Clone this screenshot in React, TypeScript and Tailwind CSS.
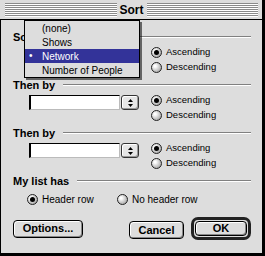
import React from 'react';

function Stripes() {
  return (
    <div className="flex-1 flex flex-col">
      {[0, 1, 2, 3, 4, 5, 6].map(i => (
        <div key={i} className="h-[2px] border-t border-[#8a8a8a] border-b border-b-white" />
      ))}
    </div>
  );
}

function Radio({ on }: { on?: boolean }) {
  return (
    <span className="w-[11px] h-[11px] rounded-full border border-[#222] bg-[radial-gradient(circle_at_35%_35%,#ffffff_10%,#9a9a9a_90%)] flex items-center justify-center shrink-0">
      {on && <span className="w-[5px] h-[5px] rounded-full bg-black" />}
    </span>
  );
}

function SectionLabel({ text }: { text: string }) {
  return (
    <div className="flex items-center h-[12px] gap-[8px]">
      <span className="font-bold text-[11px] leading-none">{text}</span>
      <div className="flex-1 h-[2px] border-t border-[#808080] border-b border-b-white" />
    </div>
  );
}

function SortRow() {
  return (
    <div className="mt-[2px] flex h-[30px]">
      <div className="ml-[16px] mt-[2px] flex gap-[1px] h-[15px]">
        <div className="w-[91px] h-[15px] bg-white border-t border-l-2 border-black border-r border-b border-r-[#bbb] border-b-[#bbb]" />
        <div className="w-[18px] h-[15px] rounded-[3px] border border-[#333] bg-[#e6e6e6] shadow-[inset_1px_1px_0_#fff,inset_-1px_-1px_0_#999] flex items-center justify-center">
          <svg width="5" height="8" viewBox="0 0 5 8">
            <polygon points="2.5,0 5,3 0,3" fill="#000" />
            <polygon points="0,5 5,5 2.5,8" fill="#000" />
          </svg>
        </div>
      </div>
      <div className="ml-[12px] flex flex-col text-[9.5px]">
        <div className="h-[15px] flex items-center gap-[4px]">
          <Radio on />
          <span>Ascending</span>
        </div>
        <div className="h-[15px] flex items-center gap-[4px]">
          <Radio />
          <span>Descending</span>
        </div>
      </div>
    </div>
  );
}

function Button({ label, w }: { label: string; w: string }) {
  return (
    <button className={`${w} h-[18px] rounded-[4px] border border-black bg-[#dddddd] shadow-[inset_1px_1px_0_#fff,inset_-1px_-1px_0_#888] font-bold text-[11px] leading-none`}>
      {label}
    </button>
  );
}

export default function App() {
  const items = ['(none)', 'Shows', 'Network', 'Number of People'];

  return (
    <div className="relative w-[265px] h-[256px] flex flex-col bg-[#dddddd] border-r-[3px] border-b-[3px] border-black text-black font-['Liberation_Sans',Arial,sans-serif]">
      {/* title bar */}
      <div className="h-[20px] flex items-center pl-[5px] pr-[4px] border-b border-black">
        <Stripes />
        <span className="px-[3px] font-bold text-[12px] leading-none">Sort</span>
        <Stripes />
      </div>

      <div className="flex-1 flex flex-col border-l border-black pl-[12px] pr-[11px] pt-[11px]">
        <SectionLabel text="Sort by" />
        <SortRow />
        <div className="mt-[4px]">
          <SectionLabel text="Then by" />
        </div>
        <SortRow />
        <div className="mt-[4px]">
          <SectionLabel text="Then by" />
        </div>
        <SortRow />
        <div className="mt-[4px]">
          <SectionLabel text="My list has" />
        </div>
        <div className="mt-[5px] h-[15px] flex items-center pl-[14px] text-[10px]">
          <div className="w-[90px] flex items-center gap-[4px]">
            <Radio on />
            <span>Header row</span>
          </div>
          <div className="flex items-center gap-[4px]">
            <Radio />
            <span>No header row</span>
          </div>
        </div>
        <div className="mt-[10px] flex items-center h-[23px]">
          <Button label="Options..." w="w-[70px]" />
          <div className="ml-[46px]">
            <Button label="Cancel" w="w-[55px]" />
          </div>
          <div className="ml-[7px] w-[60px] h-[23px] rounded-[7px] border-[3px] border-[#222] p-px flex">
            <button className="flex-1 rounded-[4px] border border-black bg-[#dddddd] shadow-[inset_1px_1px_0_#fff,inset_-1px_-1px_0_#888] font-bold text-[11px] leading-none">
              OK
            </button>
          </div>
        </div>
      </div>

      {/* open popup menu */}
      <div className="absolute left-[24px] top-[20px] w-[116px] bg-[#dddddd] border border-black shadow-[2px_2px_0_rgba(0,0,0,0.55)] text-[10px]">
        {items.map(it => (
          <div
            key={it}
            className={`relative h-[14px] flex items-center pl-[17px] ${it === 'Network' ? 'bg-[#333399] text-white' : ''}`}
          >
            {it === 'Network' && <span className="absolute left-[4px] text-[10px] leading-none">•</span>}
            {it}
          </div>
        ))}
      </div>
    </div>
  );
}
